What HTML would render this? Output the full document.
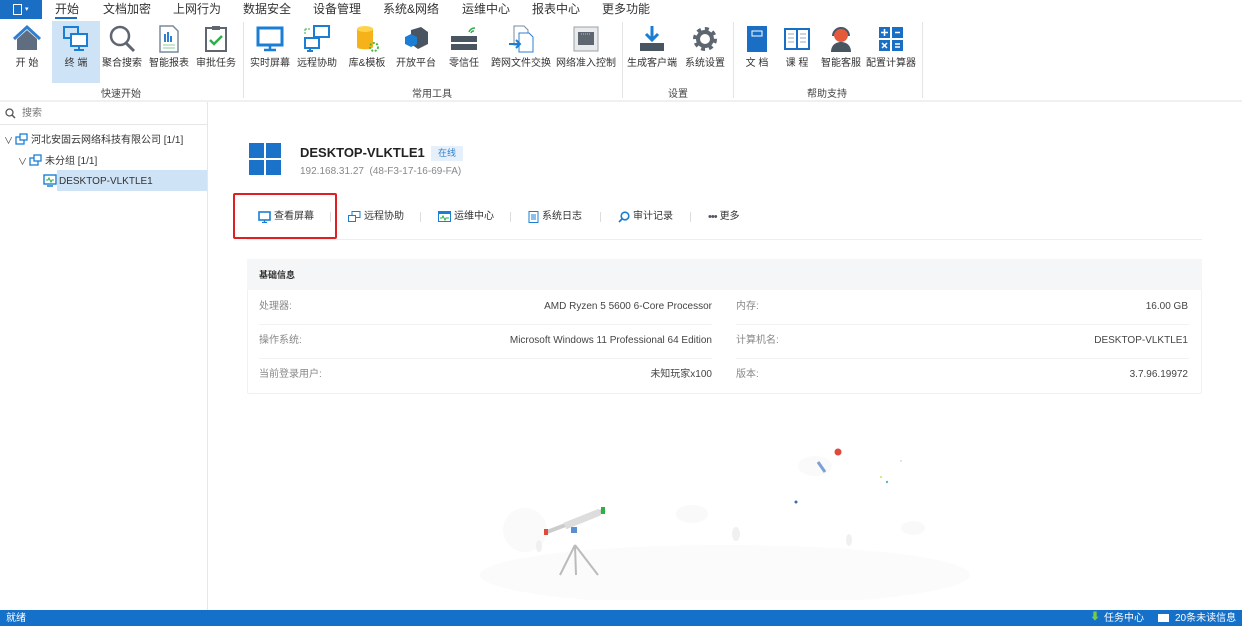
<!DOCTYPE html>
<html><head><meta charset="utf-8"><style>
*{margin:0;padding:0;box-sizing:border-box}
body{width:1242px;height:626px;overflow:hidden;background:#fff;font-family:"Liberation Sans","Noto Sans CJK SC",sans-serif;color:#333;position:relative;font-size:12px;line-height:14px}
.a{position:absolute;white-space:nowrap}
.menu{font-size:12px;color:#333;top:2px}
.ri{position:absolute;top:22px;width:50px;text-align:center;font-size:10px;color:#333;line-height:12px}
.ri svg{display:block;margin:2px auto 4px;width:30px;height:30px}
.gl{position:absolute;top:88px;font-size:10px;color:#444}
.sep{position:absolute;top:22px;width:1px;height:76px;background:#e4e4e4}
.tb{position:absolute;top:210px;font-size:10px;color:#333;display:flex;align-items:center;gap:3px}
.lab{position:absolute;font-size:10px;color:#888;line-height:14px}
.val{position:absolute;font-size:10px;color:#444;text-align:right;line-height:14px}
</style></head><body>
<div class="a" style="left:0;top:0;width:42px;height:19px;background:#1a6fc4"></div>
<div class="a" style="left:13px;top:4px;width:9px;height:11px;border:1.5px solid #fff;"></div>
<div class="a" style="left:25px;top:3px;color:#fff;font-size:7px">▾</div>
<div class="a menu" style="left:55px">开始</div>
<div class="a" style="left:55px;top:17px;width:22px;height:2px;background:#1a6fc4"></div>
<div class="a menu" style="left:103px">文档加密</div>
<div class="a menu" style="left:173px">上网行为</div>
<div class="a menu" style="left:243px">数据安全</div>
<div class="a menu" style="left:313px">设备管理</div>
<div class="a menu" style="left:383px">系统&amp;网络</div>
<div class="a menu" style="left:462px">运维中心</div>
<div class="a menu" style="left:532px">报表中心</div>
<div class="a menu" style="left:602px">更多功能</div>
<div class="a" style="left:52px;top:21px;width:48px;height:62px;background:#cfe3f6"></div>
<div class="ri" style="left:2px"><svg viewBox="0 0 30 30"><path d="M5 15L15 6l10 9v11H5z" fill="#5e6e80"/><path d="M2 15L15 3l13 12" stroke="#2f7fd0" stroke-width="3" fill="none"/></svg>开 始</div>
<div class="ri" style="left:51px"><svg viewBox="0 0 30 30"><rect x="3" y="3" width="14" height="11" fill="none" stroke="#1a7fd4" stroke-width="2"/><rect x="10" y="10" width="16" height="12" fill="#fff" stroke="#1a7fd4" stroke-width="2"/><path d="M18 22v3M13 26h10" stroke="#1a7fd4" stroke-width="2"/></svg>终 端</div>
<div class="ri" style="left:97px"><svg viewBox="0 0 30 30"><circle cx="13" cy="12" r="9" fill="none" stroke="#5e6670" stroke-width="2.5"/><path d="M19 19l8 8" stroke="#5e6670" stroke-width="3"/></svg>聚合搜索</div>
<div class="ri" style="left:144px"><svg viewBox="0 0 30 30"><path d="M6 2h13l5 5v21H6z" fill="#fff" stroke="#7a8a9a" stroke-width="1.5"/><rect x="10" y="10" width="2" height="8" fill="#2f7fd0"/><rect x="13" y="8" width="2" height="10" fill="#2f7fd0"/><rect x="16" y="12" width="2" height="6" fill="#2f7fd0"/><path d="M9 21h12M9 24h12" stroke="#8fd0a0"/></svg>智能报表</div>
<div class="ri" style="left:191px"><svg viewBox="0 0 30 30"><rect x="5" y="4" width="20" height="23" fill="#fff" stroke="#5e6670" stroke-width="2"/><rect x="11" y="2" width="8" height="4" fill="#5e6670"/><path d="M9 16l4 4 8-8" stroke="#2bb04a" stroke-width="2.5" fill="none"/></svg>审批任务</div>
<div class="sep" style="left:243px"></div>
<div class="ri" style="left:245px"><svg viewBox="0 0 30 30"><rect x="3" y="4" width="24" height="17" fill="none" stroke="#1a7fd4" stroke-width="3"/><path d="M15 21v4M9 26h12" stroke="#1a7fd4" stroke-width="2.5"/></svg>实时屏幕</div>
<div class="ri" style="left:292px"><svg viewBox="0 0 30 30"><rect x="12" y="2" width="15" height="11" fill="none" stroke="#1a7fd4" stroke-width="2"/><rect x="3" y="14" width="14" height="10" fill="none" stroke="#1a7fd4" stroke-width="2"/><path d="M3 5h6M3 5v6" stroke="#2bb04a" stroke-dasharray="2 1"/><path d="M8 24v3M5 27h6" stroke="#1a7fd4" stroke-width="2"/></svg>远程协助</div>
<div class="ri" style="left:342px"><svg viewBox="0 0 30 30"><path d="M5 5v18c0 3 16 3 16 0V5z" fill="#f5b21b"/><ellipse cx="13" cy="5" rx="8" ry="3" fill="#ffd24a"/><circle cx="22" cy="23" r="4" fill="none" stroke="#4bb84a" stroke-width="2" stroke-dasharray="2 1.5"/></svg>库&amp;模板</div>
<div class="ri" style="left:391px"><svg viewBox="0 0 30 30"><path d="M10 6l10-3 7 5v12l-10 5-7-5z" fill="#4a5562"/><path d="M4 13l6-3 6 3v7l-6 3-6-3z" fill="#1a7fd4"/></svg>开放平台</div>
<div class="ri" style="left:439px"><svg viewBox="0 0 30 30"><rect x="2" y="12" width="26" height="6" fill="#4a5562"/><rect x="2" y="20" width="26" height="6" fill="#4a5562"/><path d="M20 8a6 6 0 0 1 6-4M22 9a3 3 0 0 1 3-2" stroke="#2bb04a" stroke-width="1.5" fill="none"/></svg>零信任</div>
<div class="ri" style="left:490px;width:62px"><svg viewBox="0 0 30 30"><path d="M8 2h10l4 4v15H8z" fill="#fff" stroke="#7a8a9a"/><path d="M13 9h10l4 4v15H13z" fill="#fff" stroke="#2f7fd0"/><path d="M3 20h10M10 16l4 4-4 4" stroke="#1a7fd4" stroke-width="2" fill="none"/></svg>跨网文件交换</div>
<div class="ri" style="left:555px;width:62px"><svg viewBox="0 0 30 30"><rect x="3" y="3" width="24" height="24" fill="#e8eaec" stroke="#9aa2aa"/><rect x="7" y="8" width="16" height="13" fill="#5e6670"/><path d="M10 10h10" stroke="#e8c04a" stroke-dasharray="1 1"/></svg>网络准入控制</div>
<div class="sep" style="left:622px"></div>
<div class="ri" style="left:627px"><svg viewBox="0 0 30 30"><path d="M15 2v14M9 10l6 6 6-6" stroke="#1a7fd4" stroke-width="3" fill="none"/><rect x="3" y="19" width="24" height="8" fill="#4a5562"/></svg>生成客户端</div>
<div class="ri" style="left:680px"><svg viewBox="0 0 30 30"><circle cx="15" cy="15" r="9" fill="none" stroke="#5e6670" stroke-width="6" stroke-dasharray="3.5 3.5"/><circle cx="15" cy="15" r="7" fill="none" stroke="#5e6670" stroke-width="4"/></svg>系统设置</div>
<div class="sep" style="left:733px"></div>
<div class="ri" style="left:732px"><svg viewBox="0 0 30 30"><rect x="5" y="2" width="20" height="26" fill="#1a6fc4"/><rect x="10" y="7" width="10" height="5" fill="none" stroke="#fff"/></svg>文 档</div>
<div class="ri" style="left:772px"><svg viewBox="0 0 30 30"><rect x="2" y="4" width="26" height="22" fill="#1a6fc4"/><rect x="4" y="6" width="10" height="18" fill="#fff"/><rect x="16" y="6" width="10" height="18" fill="#fff"/><path d="M6 10h6M6 14h6M6 18h6M18 10h6M18 14h6M18 18h6" stroke="#9ab"/></svg>课 程</div>
<div class="ri" style="left:816px"><svg viewBox="0 0 30 30"><circle cx="15" cy="11" r="7" fill="#e65a3c"/><path d="M5 28c0-7 5-10 10-10s10 3 10 10z" fill="#4a5562"/><path d="M7 12a8 8 0 0 1 16 0" stroke="#4a5562" stroke-width="2" fill="none"/></svg>智能客服</div>
<div class="ri" style="left:864px;width:54px"><svg viewBox="0 0 30 30"><rect x="3" y="3" width="11" height="11" fill="#1a6fc4"/><rect x="16" y="3" width="11" height="11" fill="#1a6fc4"/><rect x="3" y="16" width="11" height="11" fill="#1a6fc4"/><rect x="16" y="16" width="11" height="11" fill="#1a6fc4"/><path d="M8.5 5v7M5 8.5h7M19 8.5h5M6 19l5 5M11 19l-5 5M19 20h5M19 23h5" stroke="#fff" stroke-width="1.5"/></svg>配置计算器</div>
<div class="sep" style="left:922px"></div>
<div class="gl" style="left:101px">快速开始</div>
<div class="gl" style="left:412px">常用工具</div>
<div class="gl" style="left:668px">设置</div>
<div class="gl" style="left:807px">帮助支持</div>
<div class="a" style="left:0;top:100px;width:1242px;height:2px;background:#eef0f2"></div>
<div class="a" style="left:207px;top:102px;width:1px;height:508px;background:#e6e6e6"></div>
<svg class="a" style="left:5px;top:108px" width="11" height="11" viewBox="0 0 11 11"><circle cx="4.5" cy="4.5" r="3.5" fill="none" stroke="#555" stroke-width="1.3"/><path d="M7 7l3 3" stroke="#555" stroke-width="1.5"/></svg>
<div class="a" style="left:22px;top:107px;font-size:10px;color:#777">搜索</div>
<div class="a" style="left:0;top:124px;width:207px;height:1px;background:#e6e6e6"></div>
<div class="a" style="left:4px;top:134px;font-size:9px;color:#444">∨</div>
<svg class="a" style="left:15px;top:133px" width="13" height="13"><rect x="1" y="4" width="8" height="7" fill="none" stroke="#1a7fd4" stroke-width="1.3"/><rect x="5" y="1" width="7" height="6" fill="#fff" stroke="#1a7fd4" stroke-width="1.3"/></svg>
<div class="a" style="left:31px;top:134px;font-size:10px;color:#333">河北安固云网络科技有限公司 [1/1]</div>
<div class="a" style="left:18px;top:155px;font-size:9px;color:#444">∨</div>
<svg class="a" style="left:29px;top:154px" width="13" height="13"><rect x="1" y="4" width="8" height="7" fill="none" stroke="#1a7fd4" stroke-width="1.3"/><rect x="5" y="1" width="7" height="6" fill="#fff" stroke="#1a7fd4" stroke-width="1.3"/></svg>
<div class="a" style="left:45px;top:155px;font-size:10px;color:#333">未分组 [1/1]</div>
<div class="a" style="left:57px;top:170px;width:150px;height:21px;background:#cfe3f6"></div>
<svg class="a" style="left:43px;top:174px" width="14" height="14"><rect x="1" y="1" width="12" height="9" fill="#fff" stroke="#1a7fd4" stroke-width="1.4"/><path d="M3 6h2l1-2 2 4 1-2h2" stroke="#2bb04a" fill="none"/><path d="M4 12h6" stroke="#1a7fd4" stroke-width="1.5"/></svg>
<div class="a" style="left:59px;top:175px;font-size:10px;color:#333">DESKTOP-VLKTLE1</div>
<div class="a" style="left:249px;top:143px;width:15px;height:15px;background:#1a73c8"></div>
<div class="a" style="left:266px;top:143px;width:15px;height:15px;background:#1a73c8"></div>
<div class="a" style="left:249px;top:160px;width:15px;height:15px;background:#1a73c8"></div>
<div class="a" style="left:266px;top:160px;width:15px;height:15px;background:#1a73c8"></div>
<div class="a" style="left:300px;top:145px;font-size:13px;font-weight:bold;color:#222;line-height:16px">DESKTOP-VLKTLE1</div>
<div class="a" style="left:431px;top:146px;width:32px;height:15px;background:#e6f0fb;color:#2f7fd0;font-size:9px;text-align:center;line-height:15px">在线</div>
<div class="a" style="left:300px;top:165px;font-size:10px;color:#888">192.168.31.27&nbsp; (48-F3-17-16-69-FA)</div>
<div class="a" style="left:233px;top:193px;width:104px;height:46px;border:2px solid #e02020;border-radius:2px"></div>
<div class="a" style="left:247px;top:239px;width:955px;height:1px;background:#eceef0"></div>
<div class="tb" style="left:258px"><svg width="13" height="12"><rect x="1" y="1" width="11" height="8" fill="none" stroke="#1a7fd4" stroke-width="1.6"/><path d="M6.5 9v2M4 11.5h5" stroke="#1a7fd4" stroke-width="1.3"/></svg>查看屏幕</div>
<div class="a" style="left:330px;top:212px;width:1px;height:10px;background:#ddd"></div>
<div class="tb" style="left:348px"><svg width="13" height="12"><rect x="4" y="0.5" width="8" height="6" fill="none" stroke="#1a7fd4"/><rect x="0.5" y="4.5" width="7" height="6" fill="#fff" stroke="#1a7fd4"/></svg>远程协助</div>
<div class="a" style="left:420px;top:212px;width:1px;height:10px;background:#ddd"></div>
<div class="tb" style="left:438px"><svg width="13" height="12"><rect x="0.5" y="0.5" width="12" height="10" fill="#fff" stroke="#1a7fd4"/><rect x="0.5" y="0.5" width="12" height="2.5" fill="#1a7fd4"/><path d="M2 7h2l1-2 2 4 1-2h3" stroke="#2bb04a" fill="none"/></svg>运维中心</div>
<div class="a" style="left:510px;top:212px;width:1px;height:10px;background:#ddd"></div>
<div class="tb" style="left:528px"><svg width="11" height="12"><rect x="1" y="0.5" width="9" height="11" fill="#fff" stroke="#1a7fd4"/><path d="M3 4h5M3 6h5M3 8h5" stroke="#1a7fd4"/></svg>系统日志</div>
<div class="a" style="left:600px;top:212px;width:1px;height:10px;background:#ddd"></div>
<div class="tb" style="left:618px"><svg width="12" height="12"><circle cx="7" cy="5" r="3.8" fill="none" stroke="#1a7fd4" stroke-width="1.6"/><path d="M4.5 7.5l-3.5 3.5" stroke="#1a7fd4" stroke-width="1.8"/></svg>审计记录</div>
<div class="a" style="left:690px;top:212px;width:1px;height:10px;background:#ddd"></div>
<div class="tb" style="left:708px"><span style="color:#556;font-size:11px;letter-spacing:-1px">•••</span>更多</div>
<div class="a" style="left:247px;top:259px;width:955px;height:135px;border:1px solid #f0f1f2;border-radius:2px"></div>
<div class="a" style="left:247px;top:259px;width:955px;height:31px;background:#f5f6f7"></div>
<div class="a" style="left:259px;top:268px;font-size:9px;font-weight:bold;color:#333">基础信息</div>
<div class="a" style="left:259px;top:324px;width:453px;height:1px;background:#f2f2f2"></div>
<div class="a" style="left:259px;top:358px;width:453px;height:1px;background:#f2f2f2"></div>
<div class="a" style="left:736px;top:324px;width:453px;height:1px;background:#f2f2f2"></div>
<div class="a" style="left:736px;top:358px;width:453px;height:1px;background:#f2f2f2"></div>
<div class="lab" style="left:259px;top:300px">处理器:</div>
<div class="lab" style="left:259px;top:334px">操作系统:</div>
<div class="lab" style="left:259px;top:368px">当前登录用户:</div>
<div class="val" style="right:530px;top:300px">AMD Ryzen 5 5600 6-Core Processor</div>
<div class="val" style="right:530px;top:334px">Microsoft Windows 11 Professional 64 Edition</div>
<div class="val" style="right:530px;top:368px">未知玩家x100</div>
<div class="lab" style="left:736px;top:300px">内存:</div>
<div class="lab" style="left:736px;top:334px">计算机名:</div>
<div class="lab" style="left:736px;top:368px">版本:</div>
<div class="val" style="right:54px;top:300px">16.00 GB</div>
<div class="val" style="right:54px;top:334px">DESKTOP-VLKTLE1</div>
<div class="val" style="right:54px;top:368px">3.7.96.19972</div>
<svg class="a" style="left:460px;top:430px" width="520" height="170" viewBox="0 0 520 170">
<ellipse cx="265" cy="145" rx="245" ry="30" fill="#fbfbfb"/>
<circle cx="65" cy="100" r="22" fill="#fafafa"/><ellipse cx="232" cy="84" rx="16" ry="9" fill="#f9f9f9"/>
<ellipse cx="355" cy="36" rx="17" ry="10" fill="#fafafa"/><ellipse cx="453" cy="98" rx="12" ry="7" fill="#f9f9f9"/>
<ellipse cx="276" cy="104" rx="4" ry="7" fill="#f0f0f0"/><ellipse cx="389" cy="110" rx="3" ry="6" fill="#f0f0f0"/><ellipse cx="79" cy="116" rx="3" ry="6" fill="#f0f0f0"/>
<path d="M115 115L100 145M115 115L116 145M115 115L138 145" stroke="#bbb" stroke-width="2"/>
<rect x="111" y="97" width="6" height="6" fill="#5a8fd0"/>
<path d="M87 102L145 80" stroke="#ccc" stroke-width="4"/><path d="M105 96L140 82" stroke="#ddd" stroke-width="7"/>
<rect x="84" y="99" width="4" height="6" fill="#e04a3a"/><rect x="141" y="77" width="4" height="7" fill="#2bb04a"/>
<circle cx="378" cy="22" r="3.5" fill="#e04a3a"/>
<path d="M358 32l7 10" stroke="#7aa0d8" stroke-width="3"/>
<circle cx="336" cy="72" r="1.5" fill="#3a6ab0"/><circle cx="427" cy="52" r="1.2" fill="#5bb"/><circle cx="421" cy="47" r="1" fill="#dd5"/><circle cx="441" cy="31" r="1" fill="#ddd"/>
</svg>
<div class="a" style="left:0;top:610px;width:1242px;height:16px;background:#1570c9"></div>
<div class="a" style="left:6px;top:612px;font-size:10px;color:#fff">就绪</div>
<div class="a" style="left:1090px;top:611px;font-size:10px;color:#7c4">⬇</div>
<div class="a" style="left:1104px;top:612px;font-size:10px;color:#fff">任务中心</div>
<div class="a" style="left:1158px;top:614px;width:11px;height:8px;background:#fff"></div>
<div class="a" style="left:1175px;top:612px;font-size:10px;color:#fff">20条未读信息</div>
</body></html>
